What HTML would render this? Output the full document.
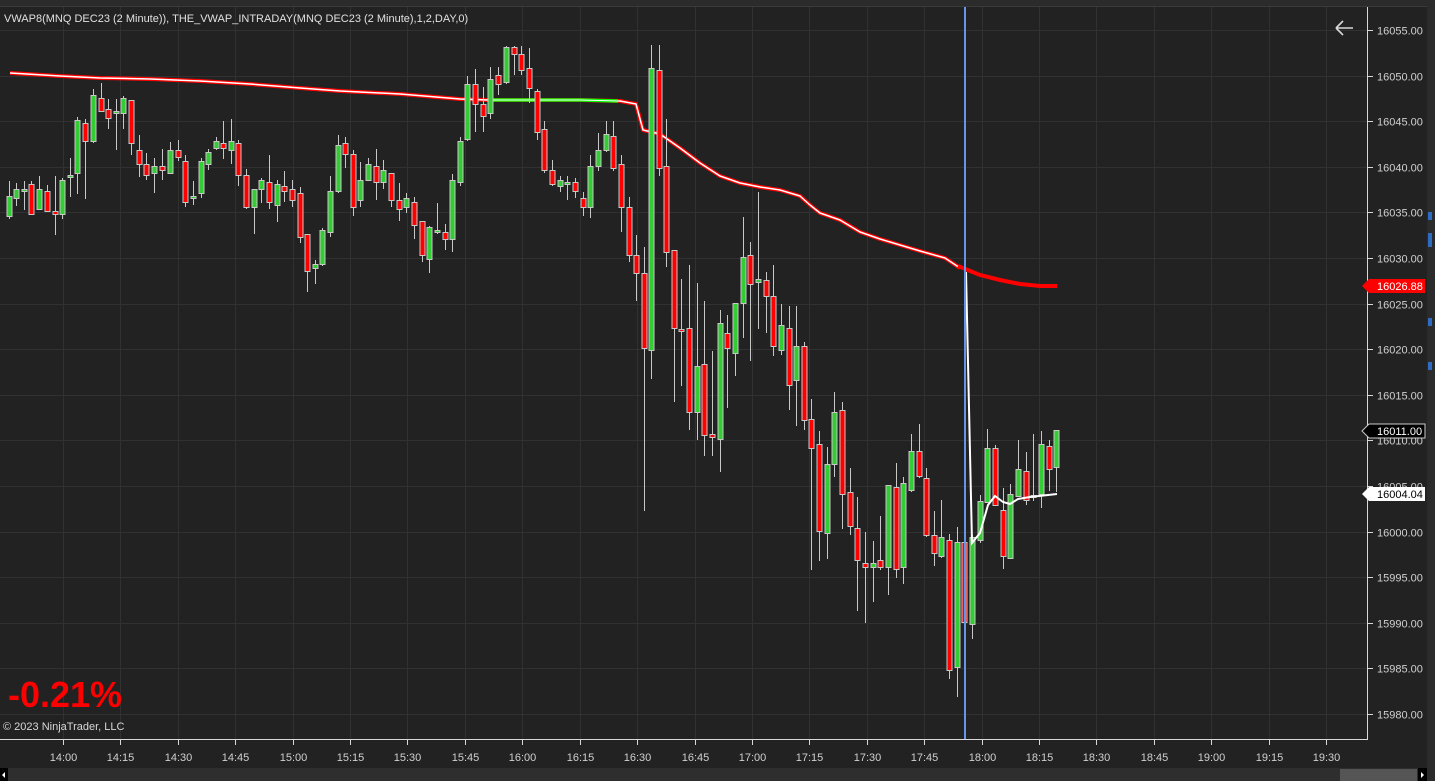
<!DOCTYPE html>
<html><head><meta charset="utf-8"><style>
html,body{margin:0;padding:0;background:#222;overflow:hidden}
svg{display:block}
text{font-family:"Liberation Sans",sans-serif}
</style></head><body>
<svg id="s" width="1435" height="781" xmlns="http://www.w3.org/2000/svg">
<rect width="1435" height="781" fill="#222"/>
<rect x="0" y="0" width="1435" height="6" fill="#2b2b2b"/>
<line x1="0" y1="6.5" x2="1427" y2="6.5" stroke="#3a3a3a"/>
<rect x="1427" y="0" width="8" height="781" fill="#2b2b2b"/>
<rect x="0" y="768" width="1427" height="13" fill="#2e2e2e"/>
<rect x="1340" y="769" width="77" height="12" fill="#555"/>
<rect x="1418" y="768" width="9" height="13" fill="#000"/>
<polygon points="1421,772 1424,775 1421,778" fill="#fff"/>
<rect x="0" y="768" width="8" height="13" fill="#000"/>
<polygon points="5,772 2,775 5,778" fill="#fff"/>
<g id="grid" stroke="#313131" stroke-width="1"></g>
<g id="vw"></g>
<g id="cd"></g>
<g id="ov"></g>
<line x1="0" y1="739.5" x2="1367" y2="739.5" stroke="#d8d8d8"/>
<line x1="1367.5" y1="7" x2="1367.5" y2="740" stroke="#d8d8d8"/>
<g id="ax" fill="#d0d0d0" font-size="11"></g>
<text x="4" y="22" fill="#e0e0e0" font-size="11">VWAP8(MNQ DEC23 (2 Minute)), THE_VWAP_INTRADAY(MNQ DEC23 (2 Minute),1,2,DAY,0)</text>
<text x="8" y="707" fill="#ff0000" font-size="36" font-weight="bold">-0.21%</text>
<text x="3" y="730" fill="#d8d8d8" font-size="11">© 2023 NinjaTrader, LLC</text>
<g stroke="#d8d8d8" stroke-width="1.6" fill="none"><path d="M1336 28H1353M1336 28L1343 21M1336 28L1343 35"/></g>
<line x1="965" y1="7" x2="965" y2="739" stroke="#6495ed" stroke-width="2"/>
<g font-size="11">
<polygon points="1362,286 1369,279 1425,279 1425,293 1369,293" fill="#ff0000"/>
<text x="1377" y="290" fill="#fff">16026.88</text>
<polygon points="1362,431 1369,424 1425,424 1425,438 1369,438" fill="#000" stroke="#ccc"/>
<text x="1377" y="435" fill="#fff">16011.00</text>
<polygon points="1362,494 1369,487 1425,487 1425,501 1369,501" fill="#fff"/>
<text x="1377" y="498" fill="#000">16004.04</text>
</g>
<rect x="1428" y="212" width="4" height="8" fill="#2d6cc0"/>
<rect x="1428" y="233" width="4" height="14" fill="#2d6cc0"/>
<rect x="1428" y="318" width="4" height="8" fill="#2d6cc0"/>
<rect x="1428" y="362" width="4" height="8" fill="#2d6cc0"/>
</svg>
<script>
var NS="http://www.w3.org/2000/svg";
function el(p,t,a){var e=document.createElementNS(NS,t);for(var k in a)e.setAttribute(k,a[k]);document.getElementById(p).appendChild(e);return e;}
var times=["14:00","14:15","14:30","14:45","15:00","15:15","15:30","15:45","16:00","16:15","16:30","16:45","17:00","17:15","17:30","17:45","18:00","18:15","18:30","18:45","19:00","19:15","19:30"];
for(var i=0;i<times.length;i++){var x=Math.round(63+i*57.41)+.5;
 el("grid","line",{x1:x,y1:7,x2:x,y2:739});
 el("ax","line",{x1:x,y1:740,x2:x,y2:745,stroke:"#d8d8d8"});
 var t=el("ax","text",{x:x,y:761,"text-anchor":"middle"});t.textContent=times[i];}
for(var i=0;i<16;i++){var y=Math.round(30+i*45.6)+.5,p=16055-5*i;
 el("grid","line",{x1:0,y1:y,x2:1367,y2:y});
 el("ax","line",{x1:1367,y1:y,x2:1373,y2:y,stroke:"#d8d8d8"});
 var t=el("ax","text",{x:1377,y:y+4});t.textContent=p.toFixed(2);}
var C=[
[9,196,216,181,219,'g'],[16,189,198,183,206,'g'],[24,189,189,181,210,'g'],[31,184,214,181,214,'r'],[39,189,209,176,209,'g'],[47,191,211,185,211,'r'],[55,211,214,176,235,'r'],[62,180,214,178,219,'g'],[70,175,177,158,197,'g'],[77,120,173,117,194,'g'],[85,123,141,119,199,'r'],[93,95,141,89,143,'g'],[101,98,111,83,111,'r'],[108,109,118,99,129,'r'],[116,111,113,99,150,'g'],[123,98,113,96,129,'g'],[131,100,143,100,155,'r'],[139,150,164,135,177,'r'],[146,164,175,153,180,'r'],[154,166,173,158,193,'g'],[162,166,170,149,180,'r'],[170,150,173,142,173,'g'],[178,150,157,140,161,'r'],[185,161,202,155,207,'r'],[193,196,198,181,205,'g'],[201,161,193,158,198,'g'],[208,152,164,149,170,'g'],[216,141,148,137,150,'g'],[223,143,148,121,159,'r'],[231,141,150,119,164,'g'],[238,143,175,140,186,'r'],[246,175,207,169,209,'r'],[254,189,207,189,234,'g'],[261,180,189,178,203,'g'],[269,182,202,155,209,'r'],[277,184,205,180,222,'g'],[284,186,191,171,202,'r'],[292,189,200,180,207,'r'],[300,193,237,187,243,'r'],[307,234,271,234,292,'r'],[315,264,268,260,284,'g'],[322,230,264,228,266,'g'],[330,191,232,176,237,'g'],[338,145,191,135,193,'g'],[345,143,154,137,168,'r'],[353,154,207,150,216,'r'],[360,180,200,162,207,'g'],[368,164,180,158,180,'g'],[376,166,182,149,200,'r'],[383,170,182,160,189,'g'],[391,173,200,173,207,'r'],[399,200,209,183,221,'r'],[406,198,207,193,213,'g'],[414,202,225,197,239,'r'],[422,221,255,221,262,'r'],[429,227,259,226,273,'g'],[437,230,230,203,234,'g'],[445,232,239,224,250,'r'],[452,180,239,174,252,'g'],[460,141,182,137,186,'g'],[467,84,139,76,141,'g'],[475,84,104,69,132,'r'],[483,104,116,87,132,'r'],[490,79,113,67,119,'g'],[498,75,84,67,95,'r'],[506,47,82,46,84,'g'],[514,47,54,46,75,'r'],[521,54,70,46,75,'r'],[529,68,88,48,103,'r'],[537,91,132,89,140,'r'],[544,129,170,121,173,'r'],[552,170,184,160,186,'r'],[560,180,186,176,192,'g'],[567,182,182,176,200,'g'],[575,182,191,178,198,'r'],[583,198,207,192,216,'r'],[590,166,207,155,218,'g'],[598,150,166,133,171,'g'],[606,134,150,121,152,'g'],[613,136,168,121,171,'r'],[621,164,207,155,232,'r'],[629,207,255,197,262,'r'],[636,255,273,235,301,'r'],[644,273,348,247,511,'r'],[651,68,350,45,379,'g'],[659,70,168,45,176,'r'],[666,166,252,119,267,'r'],[674,250,328,250,402,'r'],[681,329,331,279,386,'r'],[689,328,412,265,430,'r'],[697,366,412,283,440,'g'],[704,364,435,301,456,'r'],[712,434,437,351,456,'r'],[720,323,439,310,472,'g'],[727,333,348,315,408,'r'],[735,303,353,303,376,'g'],[743,257,303,217,338,'g'],[750,255,284,242,361,'r'],[758,279,282,192,329,'g'],[766,280,296,272,333,'r'],[773,296,346,265,356,'r'],[781,325,350,304,355,'g'],[789,328,385,306,410,'r'],[796,346,380,306,426,'g'],[804,346,420,342,430,'r'],[811,419,448,399,570,'r'],[819,444,531,431,561,'r'],[827,464,533,447,559,'g'],[834,412,464,392,477,'g'],[842,410,494,402,529,'r'],[850,492,526,468,535,'r'],[857,528,560,497,611,'r'],[865,563,567,532,623,'r'],[873,563,567,541,602,'g'],[880,560,567,516,570,'r'],[888,485,567,485,595,'g'],[896,487,569,463,578,'r'],[903,483,567,477,584,'g'],[911,451,490,434,492,'g'],[919,451,476,424,478,'r'],[926,478,535,468,537,'r'],[934,535,553,511,566,'r'],[941,537,556,500,558,'g'],[949,540,670,534,679,'r'],[957,542,667,527,697,'g'],[964,542,622,540,622,'r'],[972,537,624,535,639,'g'],[980,501,540,495,543,'g'],[987,448,502,429,502,'g'],[995,448,505,445,505,'r'],[1003,510,556,488,569,'r'],[1010,494,558,484,558,'g'],[1018,469,496,440,496,'g'],[1026,471,500,452,505,'r'],[1033,495,495,434,501,'g'],[1041,444,494,431,508,'g'],[1049,446,469,440,491,'r'],[1056,430,467,430,492,'g']];
C.forEach(function(c){var x=c[0]+.5;
 el("cd","line",{x1:x,y1:c[3],x2:x,y2:c[4],stroke:"#c8c8c8","stroke-width":1});
 var h=Math.max(c[2]-c[1],2);
 el("cd","rect",{x:c[0]-2,y:c[1]+.5,width:5,height:h,fill:c[5]=='g'?"#32cd32":"#ff0000",stroke:"#c8c8c8","stroke-width":1});});
var red="M10,73 L60,76 L100,78 L150,79 L200,81 L250,84 L300,88 L340,91 L400,94 L460,99 L488,100 L540,100 L580,100 L620,101 L636,104 L643,130 L660,134 L680,148 L700,163 L720,176 L740,183 L760,187 L780,190 L800,196 L810,205 L820,213 L840,220 L860,232 L880,239 L900,245 L920,251 L945,258 L960,268";
el("vw","path",{d:red,fill:"none",stroke:"#ff0000","stroke-width":4,"stroke-linejoin":"round"});
el("vw","path",{d:red,fill:"none",stroke:"#fff","stroke-width":1.5,"stroke-linejoin":"round"});
el("vw","path",{d:"M488,100 L540,100 L580,100 L618,101",fill:"none",stroke:"#00ff00","stroke-width":3.5});
el("vw","path",{d:"M488,100 L540,100 L580,100 L618,101",fill:"none",stroke:"#fff","stroke-width":1});
el("ov","path",{d:"M958,266 L980,275 L1000,280 L1020,284 L1040,286 L1057,286",fill:"none",stroke:"#ff0000","stroke-width":4});
el("ov","path",{d:"M966,272 L972,543 L980,533 L988,505 L995,496 L1003,502 L1010,504 L1018,499 L1030,497 L1057,494",fill:"none",stroke:"#fff","stroke-width":2});
</script>
</body></html>
